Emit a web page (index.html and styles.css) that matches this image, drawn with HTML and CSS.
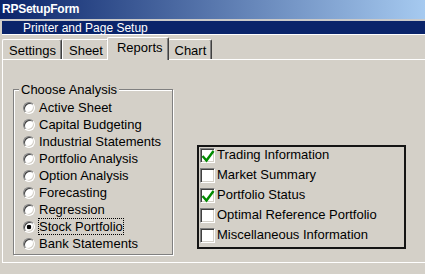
FILE: index.html
```html
<!DOCTYPE html>
<html>
<head>
<meta charset="utf-8">
<link rel="stylesheet" href="styles.css">
</head>
<body>
<div class="titlebar">RPSetupForm</div>
<div class="subbar">Printer and Page Setup</div>
<div class="tabstrip">
  <div class="tab">Settings</div>
  <div class="tab">Sheet</div>
  <div class="tab active">Reports</div>
  <div class="tab">Chart</div>
</div>
<div class="panel">
  <fieldset class="analysis">
    <legend>Choose Analysis</legend>
    <div class="opt"><span class="radio"></span><span>Active Sheet</span></div>
    <div class="opt"><span class="radio"></span><span>Capital Budgeting</span></div>
    <div class="opt"><span class="radio"></span><span>Industrial Statements</span></div>
    <div class="opt"><span class="radio"></span><span>Portfolio Analysis</span></div>
    <div class="opt"><span class="radio"></span><span>Option Analysis</span></div>
    <div class="opt"><span class="radio"></span><span>Forecasting</span></div>
    <div class="opt"><span class="radio"></span><span>Regression</span></div>
    <div class="opt"><span class="radio on"></span><span class="focus">Stock Portfolio</span></div>
    <div class="opt"><span class="radio"></span><span>Bank Statements</span></div>
  </fieldset>
  <div class="reports">
    <div class="chk"><span class="box"><svg width="15" height="15" viewBox="0 0 15 15"><polyline points="1.5,7 5.5,11.5 12.5,2" fill="none" stroke="#008a00" stroke-width="2.4"/></svg></span><span>Trading Information</span></div>
    <div class="chk"><span class="box"></span><span>Market Summary</span></div>
    <div class="chk"><span class="box"><svg width="15" height="15" viewBox="0 0 15 15"><polyline points="1.5,7 5.5,11.5 12.5,2" fill="none" stroke="#008a00" stroke-width="2.4"/></svg></span><span>Portfolio Status</span></div>
    <div class="chk"><span class="box"></span><span>Optimal Reference Portfolio</span></div>
    <div class="chk"><span class="box"></span><span>Miscellaneous Information</span></div>
  </div>
</div>
</body>
</html>
```
FILE: styles.css
```css
* { box-sizing: border-box; }
html, body { margin: 0; }
body {
  width: 425px;
  height: 274px;
  overflow: hidden;
  background: #d4d0c8;
  font-family: "Liberation Sans", Arial, sans-serif;
  font-size: 13px;
  color: #000;
}
.titlebar {
  height: 21px;
  border-bottom: 2px solid #c9c9c9;
  background: linear-gradient(to right, #0a246a, #a6caf0);
  background-clip: padding-box;
  color: #fff;
  font-weight: bold;
  font-size: 12px;
  letter-spacing: -0.25px;
  line-height: 19px;
  padding-left: 2px;
}
.subbar {
  height: 14px;
  margin-left: 2px;
  background: #0a246a;
  border-bottom: 1px solid #fff;
  color: #fff;
  font-size: 12px;
  line-height: 15px;
  padding-left: 21px;
  overflow: hidden;
}
.tabstrip {
  height: 24px;
  display: flex;
  align-items: flex-end;
  padding-left: 2px;
}
.tab {
  height: 20px;
  border-top: 1px solid #fff;
  border-left: 1px solid #fff;
  border-right: 1px solid #404040;
  box-shadow: inset -1px 0 0 #808080;
  border-radius: 2px 2px 0 0;
  padding: 3px 5px 0 6px;
  line-height: 15px;
  white-space: nowrap;
}
.tab.active {
  height: 23px;
  margin: 0 -1px -1px -2px;
  padding: 2px 5px 0 9px;
  background: #d4d0c8;
  position: relative;
  z-index: 1;
}
.panel {
  height: 204px;
  margin-left: 2px;
  border-top: 1px solid #fff;
  border-left: 1px solid #fff;
  border-bottom: 1px solid #fff;
  display: flex;
  align-items: flex-start;
  padding: 22px 0 0 10px;
}
.analysis {
  width: 160px;
  min-width: 0;
  margin: 0;
  padding: 2px 0 2px 0;
  border: 1px solid #808080;
  box-shadow: inset 1px 1px 0 #fff, 1px 1px 0 #fff;
}
.analysis legend {
  margin-left: 5px;
  padding: 0 2px;
  line-height: 15px;
  background: #d4d0c8;
}
.opt {
  display: flex;
  align-items: center;
  height: 17px;
  padding-left: 9px;
  gap: 4px;
  line-height: 15px;
  white-space: nowrap;
}
.radio {
  flex: none;
  width: 12px;
  height: 12px;
  border-radius: 50%;
  background: #fff;
  border: 1px solid;
  border-color: #808080 #fff #fff #808080;
  box-shadow: inset 1px 1px 0 #404040, inset -1px -1px 0 #d4d0c8;
}
.radio.on {
  background: radial-gradient(circle, #000 0 2px, #fff 2.6px);
}
.focus {
  outline: 1px dotted #000;
  outline-offset: 0;
}
.reports {
  width: 209px;
  margin: 63px 0 0 24px;
  border: 2px solid #141414;
  padding: 0 0 4px 1px;
  display: flex;
  flex-direction: column;
  gap: 4px;
}
.chk {
  display: flex;
  align-items: center;
  height: 16px;
  gap: 2px;
  line-height: 16px;
  white-space: nowrap;
}
.box {
  flex: none;
  width: 15px;
  height: 15px;
  background: #fff;
  border: 1px solid;
  border-color: #808080 #fff #fff #808080;
  box-shadow: inset 1px 1px 0 #404040, inset -1px -1px 0 #d4d0c8;
  display: grid;
  place-items: center;
}
.box svg { display: block; }
```
